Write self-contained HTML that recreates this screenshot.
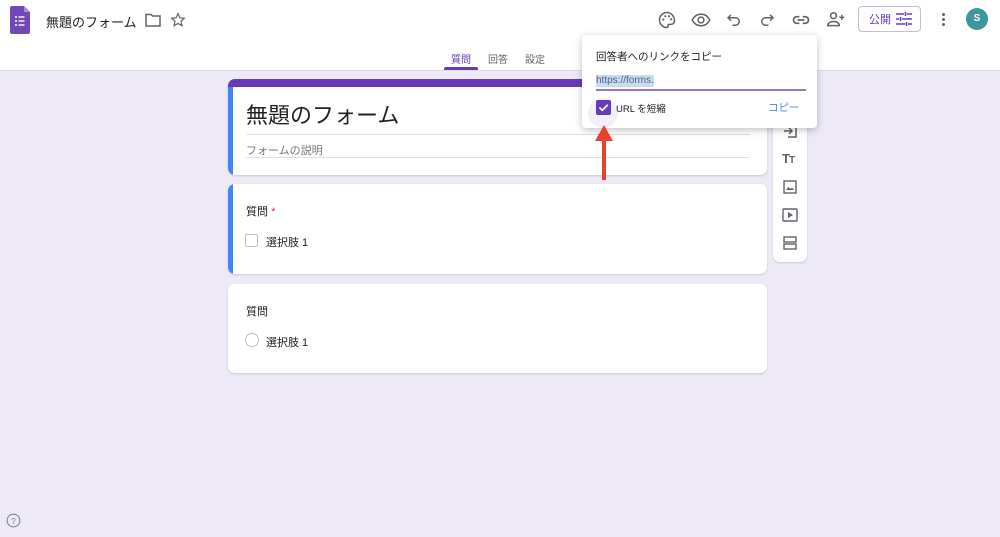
<!DOCTYPE html>
<html><head><meta charset="utf-8"><style>
*{margin:0;padding:0;box-sizing:border-box}
body{width:1000px;height:537px;overflow:hidden;background:#ede9f6;font-family:"Liberation Sans","Noto Sans CJK JP",sans-serif;color:#202124;position:relative}
.hdr{position:absolute;left:0;top:0;width:1000px;height:71px;background:#fff;border-bottom:1px solid #dadce0}
.abs{position:absolute}
.card{position:absolute;background:#fff;border-radius:7px;box-shadow:0 1px 2px rgba(0,0,0,.15)}
svg{display:block}
</style></head><body>
<div class="hdr">
 <svg class="abs" style="left:10px;top:6px" width="20" height="28" viewBox="0 0 20 28"><path d="M2 0h12l6 6v20a2 2 0 0 1-2 2H2a2 2 0 0 1-2-2V2a2 2 0 0 1 2-2z" fill="#7248b9"/><path d="M14 0l6 6h-6z" fill="#a88ad8"/><g fill="#fff"><circle cx="6" cy="11" r="1"/><circle cx="6" cy="15" r="1"/><circle cx="6" cy="19" r="1"/><rect x="8.5" y="10.3" width="6" height="1.4"/><rect x="8.5" y="14.3" width="6" height="1.4"/><rect x="8.5" y="18.3" width="6" height="1.4"/></g></svg>
 <div class="abs" style="left:46px;top:12px;font-size:13px;color:#202124">無題のフォーム</div>
 <svg class="abs" style="left:145px;top:13px" width="16" height="14" viewBox="0 0 16 14"><path d="M1 1.5h5l1.5 1.5H15v10H1z" fill="none" stroke="#5f6368" stroke-width="1.5"/></svg>
 <svg class="abs" style="left:170px;top:12px" width="16" height="16" viewBox="0 0 24 24"><path d="M12 2.5l2.9 6.2 6.6.7-5 4.5 1.4 6.6L12 17.2l-5.9 3.3 1.4-6.6-5-4.5 6.6-.7z" fill="none" stroke="#5f6368" stroke-width="1.8"/></svg>
 <svg class="abs" style="left:657px;top:10px" width="20" height="20" viewBox="0 0 24 24"><path d="M12 3a9 9 0 0 0 0 18c1.2 0 1.600-.8 1.200-1.600-.5-1 .1-2.200 1.300-2.200H17a4 4 0 0 0 4-4c0-5.600-4-10.200-9-10.200z" fill="none" stroke="#5f6368" stroke-width="1.8"/><circle cx="7.5" cy="11.5" r="1.3" fill="#5f6368"/><circle cx="10" cy="7.5" r="1.3" fill="#5f6368"/><circle cx="14.5" cy="7.5" r="1.3" fill="#5f6368"/><circle cx="17" cy="11" r="1.3" fill="#5f6368"/></svg>
 <svg class="abs" style="left:690px;top:10px" width="22" height="20" viewBox="0 0 24 24"><path d="M1.5 12C4 7 8 5 12 5s8 2 10.5 7C20 17 16 19 12 19s-8-2-10.5-7z" fill="none" stroke="#5f6368" stroke-width="1.8"/><circle cx="12" cy="12" r="3.5" fill="none" stroke="#5f6368" stroke-width="1.8"/></svg>
 <svg class="abs" style="left:725px;top:10px" width="18" height="20" viewBox="0 0 24 24"><path d="M8 5L4 9l4 4M4 9h10a5 5 0 0 1 0 10h-4" fill="none" stroke="#5f6368" stroke-width="2"/></svg>
 <svg class="abs" style="left:758px;top:10px" width="18" height="20" viewBox="0 0 24 24"><path d="M16 5l4 4-4 4M20 9H10a5 5 0 0 0 0 10h4" fill="none" stroke="#5f6368" stroke-width="2"/></svg>
 <svg class="abs" style="left:791px;top:10px" width="20" height="20" viewBox="0 0 24 24"><path d="M10 8H7a4 4 0 0 0 0 8h3M14 8h3a4 4 0 0 1 0 8h-3M8 12h8" fill="none" stroke="#5f6368" stroke-width="2"/></svg>
 <svg class="abs" style="left:825px;top:9px" width="22" height="20" viewBox="0 0 24 24"><circle cx="9" cy="8" r="3.5" fill="none" stroke="#5f6368" stroke-width="1.8"/><path d="M2 20c0-3.5 3.5-5 7-5s7 1.5 7 5z" fill="none" stroke="#5f6368" stroke-width="1.8"/><path d="M19 7v6M16 10h6" stroke="#5f6368" stroke-width="1.8"/></svg>
 <div class="abs" style="left:858px;top:6px;width:63px;height:26px;border:1px solid #c9b6ef;border-radius:4px"></div>
 <div class="abs" style="left:869px;top:11px;font-size:11px;color:#673ab7">公開</div>
 <svg class="abs" style="left:896px;top:12px" width="16" height="14" viewBox="0 0 16 14"><g stroke="#673ab7" stroke-width="1.6"><path d="M0 2h8M11 2h5M9.5 0v4M0 7h3M6 7h10M4.5 5v4M0 12h9M12 12h4M10.5 10v4"/></g></svg>
 <div class="abs" style="left:942px;top:13px;width:3px;height:3px;border-radius:50%;background:#5f6368;box-shadow:0 5px 0 #5f6368,0 10px 0 #5f6368"></div>
 <div class="abs" style="left:966px;top:8px;width:22px;height:22px;border-radius:50%;background:#3c979c;color:#fff;font-size:10px;font-weight:bold;text-align:center;line-height:22px">S</div>
 <div class="abs" style="left:451px;top:51px;font-size:10px;color:#673ab7">質問</div>
 <div class="abs" style="left:488px;top:51px;font-size:10px;color:#5f6368">回答</div>
 <div class="abs" style="left:525px;top:51px;font-size:10px;color:#5f6368">設定</div>
 <div class="abs" style="left:444px;top:67px;width:34px;height:3px;background:#673ab7;border-radius:2px 2px 0 0"></div>
</div>

<div class="card" style="left:228px;top:79px;width:539px;height:96px;overflow:hidden">
 <div class="abs" style="left:0;top:0;width:539px;height:8px;background:#673ab7"></div>
 <div class="abs" style="left:0;top:8px;width:5px;height:88px;background:#4285f4"></div>
 <div class="abs" style="left:18px;top:19px;font-size:22px;color:#202124">無題のフォーム</div>
 <div class="abs" style="left:18px;top:55px;width:504px;height:1px;background:#e0e0e0"></div>
 <div class="abs" style="left:18px;top:63px;font-size:11px;color:#70757a">フォームの説明</div>
 <div class="abs" style="left:18px;top:78px;width:504px;height:1px;background:#e0e0e0"></div>
</div>
<div class="card" style="left:228px;top:184px;width:539px;height:90px;overflow:hidden">
 <div class="abs" style="left:0;top:0;width:5px;height:90px;background:#4285f4"></div>
 <div class="abs" style="left:18px;top:19px;font-size:11px">質問 <span style="color:#d93025">*</span></div>
 <div class="abs" style="left:17px;top:50px;width:13px;height:13px;border:1.5px solid #bdbdbd;border-radius:2px"></div>
 <div class="abs" style="left:38px;top:50px;font-size:11px">選択肢 1</div>
</div>
<div class="card" style="left:228px;top:284px;width:539px;height:89px">
 <div class="abs" style="left:18px;top:19px;font-size:11px">質問</div>
 <div class="abs" style="left:17px;top:49px;width:14px;height:14px;border:1.5px solid #bdbdbd;border-radius:50%"></div>
 <div class="abs" style="left:38px;top:50px;font-size:11px">選択肢 1</div>
</div>
<div class="card" style="left:773px;top:110px;width:34px;height:152px">
 <svg class="abs" style="left:10px;top:14px" width="14" height="14" viewBox="0 0 14 14"><path d="M5 1h8v12H5M1 7h8M6 4l3 3-3 3" fill="none" stroke="#5f6368" stroke-width="1.5"/></svg>
 <div class="abs" style="left:9px;top:41px;font-size:13px;font-weight:bold;color:#5f6368;letter-spacing:-1px">T<span style="font-size:10px">T</span></div>
 <svg class="abs" style="left:10px;top:70px" width="14" height="14" viewBox="0 0 14 14"><rect x="1" y="1" width="12" height="12" fill="none" stroke="#5f6368" stroke-width="1.4"/><path d="M3 10l2.5-3 2 2 1.5-1.5L11 10z" fill="#5f6368"/></svg>
 <svg class="abs" style="left:9px;top:98px" width="16" height="14" viewBox="0 0 16 14"><rect x="1" y="1" width="14" height="12" rx="1" fill="none" stroke="#5f6368" stroke-width="1.4"/><path d="M6 4l5 3-5 3z" fill="#5f6368"/></svg>
 <svg class="abs" style="left:10px;top:126px" width="14" height="14" viewBox="0 0 14 14"><rect x="1" y="1" width="12" height="5" fill="none" stroke="#5f6368" stroke-width="1.4"/><rect x="1" y="8" width="12" height="5" fill="none" stroke="#5f6368" stroke-width="1.4"/></svg>
</div>
<div class="abs" style="left:582px;top:35px;width:235px;height:93px;background:#fff;border-radius:4px;box-shadow:0 2px 8px rgba(0,0,0,.25)">
 <div class="abs" style="left:14px;top:14px;font-size:10.5px;color:#202124">回答者へのリンクをコピー</div>
 <div class="abs" style="left:14px;top:40px;font-size:10px;color:#5f6368;background:#c6dbf7;line-height:12px">https://forms.</div>
 <div class="abs" style="left:14px;top:54px;width:210px;height:2px;background:#9575cd"></div>
 <div class="abs" style="left:6px;top:63px;width:30px;height:30px;border-radius:50%;background:#f3eefb"></div>
 <div class="abs" style="left:14px;top:65px;width:15px;height:15px;background:#673ab7;border-radius:2px"></div>
 <svg class="abs" style="left:15px;top:66px" width="13" height="13" viewBox="0 0 13 13"><path d="M2.5 6.5l2.8 2.8 5.5-5.5" fill="none" stroke="#fff" stroke-width="1.7"/></svg>
 <div class="abs" style="left:34px;top:66px;font-size:9.5px;color:#202124">URL を短縮</div>
 <div class="abs" style="left:186px;top:65px;font-size:10.5px;color:#4285f4">コピー</div>
</div>
<svg class="abs" style="left:593px;top:124px" width="22" height="58" viewBox="0 0 22 58"><path d="M11 56V14" stroke="#e8412c" stroke-width="4"/><path d="M11 1L20 17H2z" fill="#e8412c"/></svg>
<svg class="abs" style="left:6px;top:513px" width="15" height="15" viewBox="0 0 16 16"><circle cx="8" cy="8" r="6.8" fill="none" stroke="#80868b" stroke-width="1.2"/><text x="8" y="11.5" font-size="9" text-anchor="middle" fill="#80868b" font-family="Liberation Sans">?</text></svg>
</body></html>
